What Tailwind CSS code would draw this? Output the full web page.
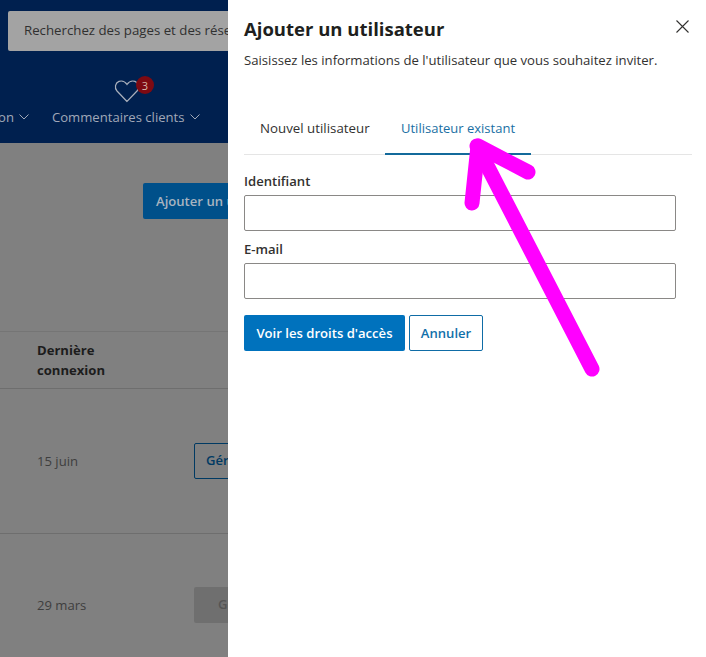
<!DOCTYPE html>
<html lang="fr">
<head>
<meta charset="utf-8">
<script src="https://cdn.jsdelivr.net/npm/@tailwindcss/browser@4"></script>
</head>
<body class="m-0 overflow-hidden">
<div class="relative w-[706px] h-[657px] overflow-hidden bg-[#808080] font-['Open_Sans','Noto_Sans',sans-serif]">
  <!-- Dimmed page -->
  <div class="w-[228px] h-full overflow-hidden flex flex-col">
    <header class="h-[143px] w-[706px] shrink-0 bg-[#00204f] pt-[11px] flex flex-col">
      <div class="ml-[8px] h-[40px] w-[400px] rounded-[2px] bg-[#a3a3a3] pl-[16px] flex items-center text-[13.25px] text-[#303030]">Recherchez des pages et des réseaux</div>
      <div class="relative h-[92px] text-[13.1px] text-[#a0a8b8]">
        <svg class="absolute left-[114px] top-[28px]" width="26" height="24" viewBox="0 0 26 24" fill="none" stroke="#a9b0bc" stroke-width="1.2"><path d="M13 22.500 3 12C.2 8.800 1.200 3.800 5 2.400c3-1 6 .2 8 3 2-2.800 5-4 8-3 3.800 1.400 4.800 6.400 2 9.600Z"/></svg>
        <div class="absolute left-[136px] top-[25px] size-[18px] rounded-full bg-[#7d0a12] flex items-center justify-center text-[11px] leading-none text-[#d8b8a8]">3</div>
        <div class="absolute -left-[2px] top-[57px] leading-[18px] flex items-center gap-[5px]"><span>on</span><svg width="10" height="6" viewBox="0 0 10 6" fill="none" stroke="#a0a8b8" stroke-width="1"><path d="m.5.500 4.500 4.500 4.500-4.500"/></svg></div>
        <div class="absolute left-[52px] top-[57px] leading-[18px] flex items-center gap-[5px] whitespace-nowrap"><span>Commentaires clients</span><svg width="10" height="6" viewBox="0 0 10 6" fill="none" stroke="#a0a8b8" stroke-width="1"><path d="m.5.500 4.500 4.500 4.500-4.500"/></svg></div>
      </div>
    </header>
    <div class="h-[189px] w-[706px] shrink-0 border-b border-[#757575] pt-[40px]">
      <div class="ml-[143px] h-[36px] w-[120px] rounded-[2px] bg-[#00508a] pl-[13px] pt-[1px] flex items-center text-[13.1px] font-semibold text-[#a8b4c0] whitespace-nowrap">Ajouter un utilisateur</div>
    </div>
    <div class="h-[57px] w-[706px] shrink-0 border-b border-[#6e6e6e] pl-[37px] pt-[8px] text-[13.1px] leading-[20px] font-bold text-[#1c1c1c]">Dernière<br>connexion</div>
    <div class="h-[145px] w-[706px] shrink-0 border-b border-[#6e6e6e] pl-[37px] flex items-center text-[13.1px] text-[#3e3e3e]">
      <span class="w-[157px] pt-[1px]">15 juin</span>
      <div class="h-[36px] w-[120px] rounded-[2px] border border-[#003a63] pl-[11px] flex items-center font-semibold text-[#003a63]">Gérer</div>
    </div>
    <div class="h-[142px] w-[706px] shrink-0 pl-[37px] flex items-center text-[13.1px] text-[#3e3e3e]">
      <span class="w-[157px] pt-[2px]">29 mars</span>
      <div class="h-[36px] w-[120px] rounded-[2px] bg-[#6f6f6f] pl-[24px] flex items-center font-semibold text-[#555555]">Gérer</div>
    </div>
  </div>

  <!-- Drawer -->
  <aside class="absolute left-[228px] top-0 bottom-0 right-0 bg-white pl-[16px] pr-[14px] pt-[17px]">
    <div class="flex items-start justify-between">
      <h1 class="text-[18.5px] leading-[24px] font-bold text-[#201f1e]">Ajouter un utilisateur</h1>
      <svg class="mt-[3px] mr-[3px]" width="13" height="13" viewBox="0 0 13 13" fill="none" stroke="#323130" stroke-width="1.100"><path d="m.5.500 12 12M12.500.500l-12 12"/></svg>
    </div>
    <p class="mt-[9px] text-[13.15px] leading-[20px] text-[#323130]">Saisissez les informations de l'utilisateur que vous souhaitez inviter.</p>
    <nav class="mt-[39px] h-[46px] border-b border-[#e5e5e5] flex">
      <div class="w-[141px] h-[46px] pl-[16px] pt-[9px] text-[13.3px] leading-[20px] text-[#323130]">Nouvel utilisateur</div>
      <div class="w-[146px] h-[46px] pl-[16px] pt-[9px] text-[13px] leading-[20px] text-[#1a6fa3] border-b-2 border-[#136a9b]">Utilisateur existant</div>
    </nav>
    <label class="block mt-[16px] text-[13.1px] leading-[20px] font-semibold text-[#323130]">Identifiant</label>
    <div class="mt-[4px] h-[36px] w-[432px] rounded-[2px] border border-[#8a8886]"></div>
    <label class="block mt-[8px] text-[13.1px] leading-[20px] font-semibold text-[#323130]">E-mail</label>
    <div class="mt-[4px] h-[36px] w-[432px] rounded-[2px] border border-[#8a8886]"></div>
    <div class="mt-[16px] flex gap-[4px]">
      <div class="h-[36px] w-[161px] rounded-[2px] bg-[#0072bd] pt-[1px] flex items-center justify-center text-[13.1px] font-semibold text-white whitespace-nowrap">Voir les droits d'accès</div>
      <div class="h-[36px] w-[74px] rounded-[2px] border border-[#0f6ca6] pt-[1px] flex items-center justify-center text-[13.1px] font-semibold text-[#1170aa]">Annuler</div>
    </div>
  </aside>

  <!-- Annotation arrow -->
  <svg class="absolute left-0 top-0 pointer-events-none" width="706" height="657" viewBox="0 0 706 657" fill="none" stroke="#ff00ff" stroke-width="15" stroke-linecap="round" stroke-linejoin="round">
    <path d="M592 369 477 146"/>
    <path d="M472 203 478 146 528 172"/>
  </svg>
</div>
</body>
</html>
